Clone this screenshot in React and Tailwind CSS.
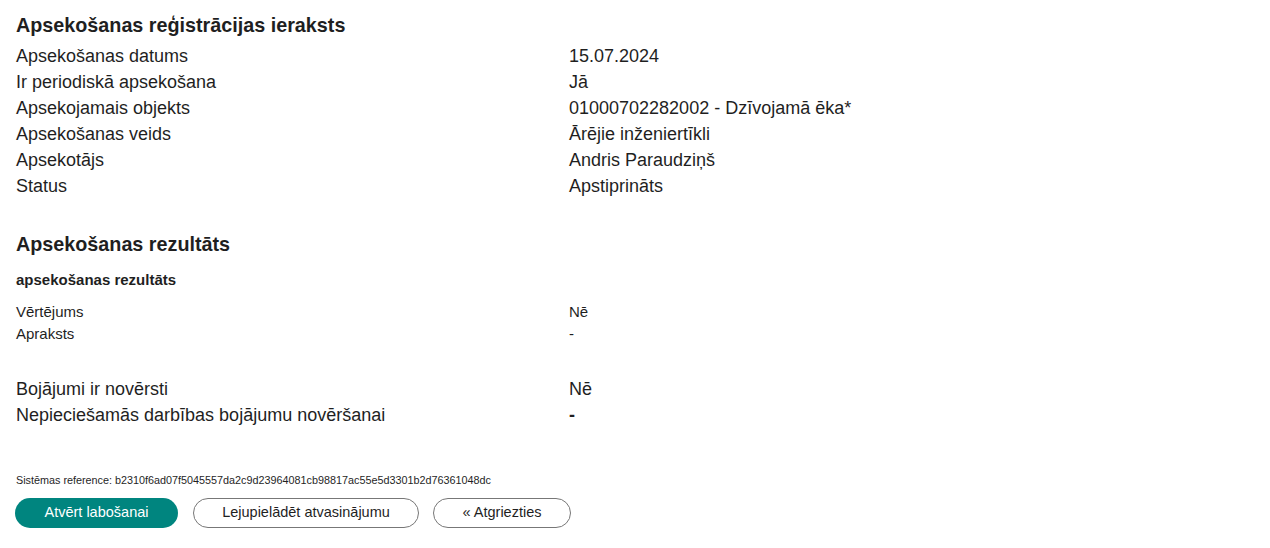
export default function App() {
    const mainRows = [
        ['Apsekošanas datums', '15.07.2024'],
        ['Ir periodiskā apsekošana', 'Jā'],
        ['Apsekojamais objekts', '01000702282002 - Dzīvojamā ēka*'],
        ['Apsekošanas veids', 'Ārējie inženiertīkli'],
        ['Apsekotājs', 'Andris Paraudziņš'],
        ['Status', 'Apstiprināts'],
    ];

    return (
        <div className="min-h-screen bg-white px-4 pt-3 text-[#1f1f1f]" style={{ fontFamily: '"Liberation Sans", Arial, sans-serif' }}>
            {/* Registration record */}
            <h2 className="text-[19.75px] font-bold leading-[26px]">Apsekošanas reģistrācijas ieraksts</h2>
            <dl className="mt-[5px] grid grid-cols-[553px_1fr] text-[18px] leading-[26px]">
                {mainRows.map(([label, value]) => (
                    <div key={label} className="contents">
                        <dt>{label}</dt>
                        <dd>{value}</dd>
                    </div>
                ))}
            </dl>

            {/* Result */}
            <h2 className="mt-[32px] text-[19.75px] font-bold leading-[26px]">Apsekošanas rezultāts</h2>
            <h3 className="mt-3 text-[15px] font-bold leading-[22px]">apsekošanas rezultāts</h3>
            <dl className="mt-2.5 grid grid-cols-[553px_1fr] text-[15px] leading-[22px]">
                <dt>Vērtējums</dt>
                <dd>Nē</dd>
                <dt>Apraksts</dt>
                <dd>-</dd>
            </dl>

            <dl className="mt-[31px] grid grid-cols-[553px_1fr] text-[18px] leading-[26px]">
                <dt>Bojājumi ir novērsti</dt>
                <dd>Nē</dd>
                <dt>Nepieciešamās darbības bojājumu novēršanai</dt>
                <dd className="font-bold">-</dd>
            </dl>

            <p className="mt-[45px] text-[10.8px] leading-[14px]">
                Sistēmas reference: b2310f6ad07f5045557da2c9d23964081cb98817ac55e5d3301b2d76361048dc
            </p>

            <div className="-ml-px mt-[11px] flex">
                <button className="h-[30px] w-[163px] rounded-full bg-[#00857f] text-[14.5px] text-white">Atvērt labošanai</button>
                <button className="ml-[15px] h-[30px] w-[226px] rounded-full border border-[#777] bg-white text-[14.5px]">Lejupielādēt atvasinājumu</button>
                <button className="ml-[14px] h-[30px] w-[138px] rounded-full border border-[#777] bg-white text-[14.5px]">« Atgriezties</button>
            </div>
        </div>
    );
}
